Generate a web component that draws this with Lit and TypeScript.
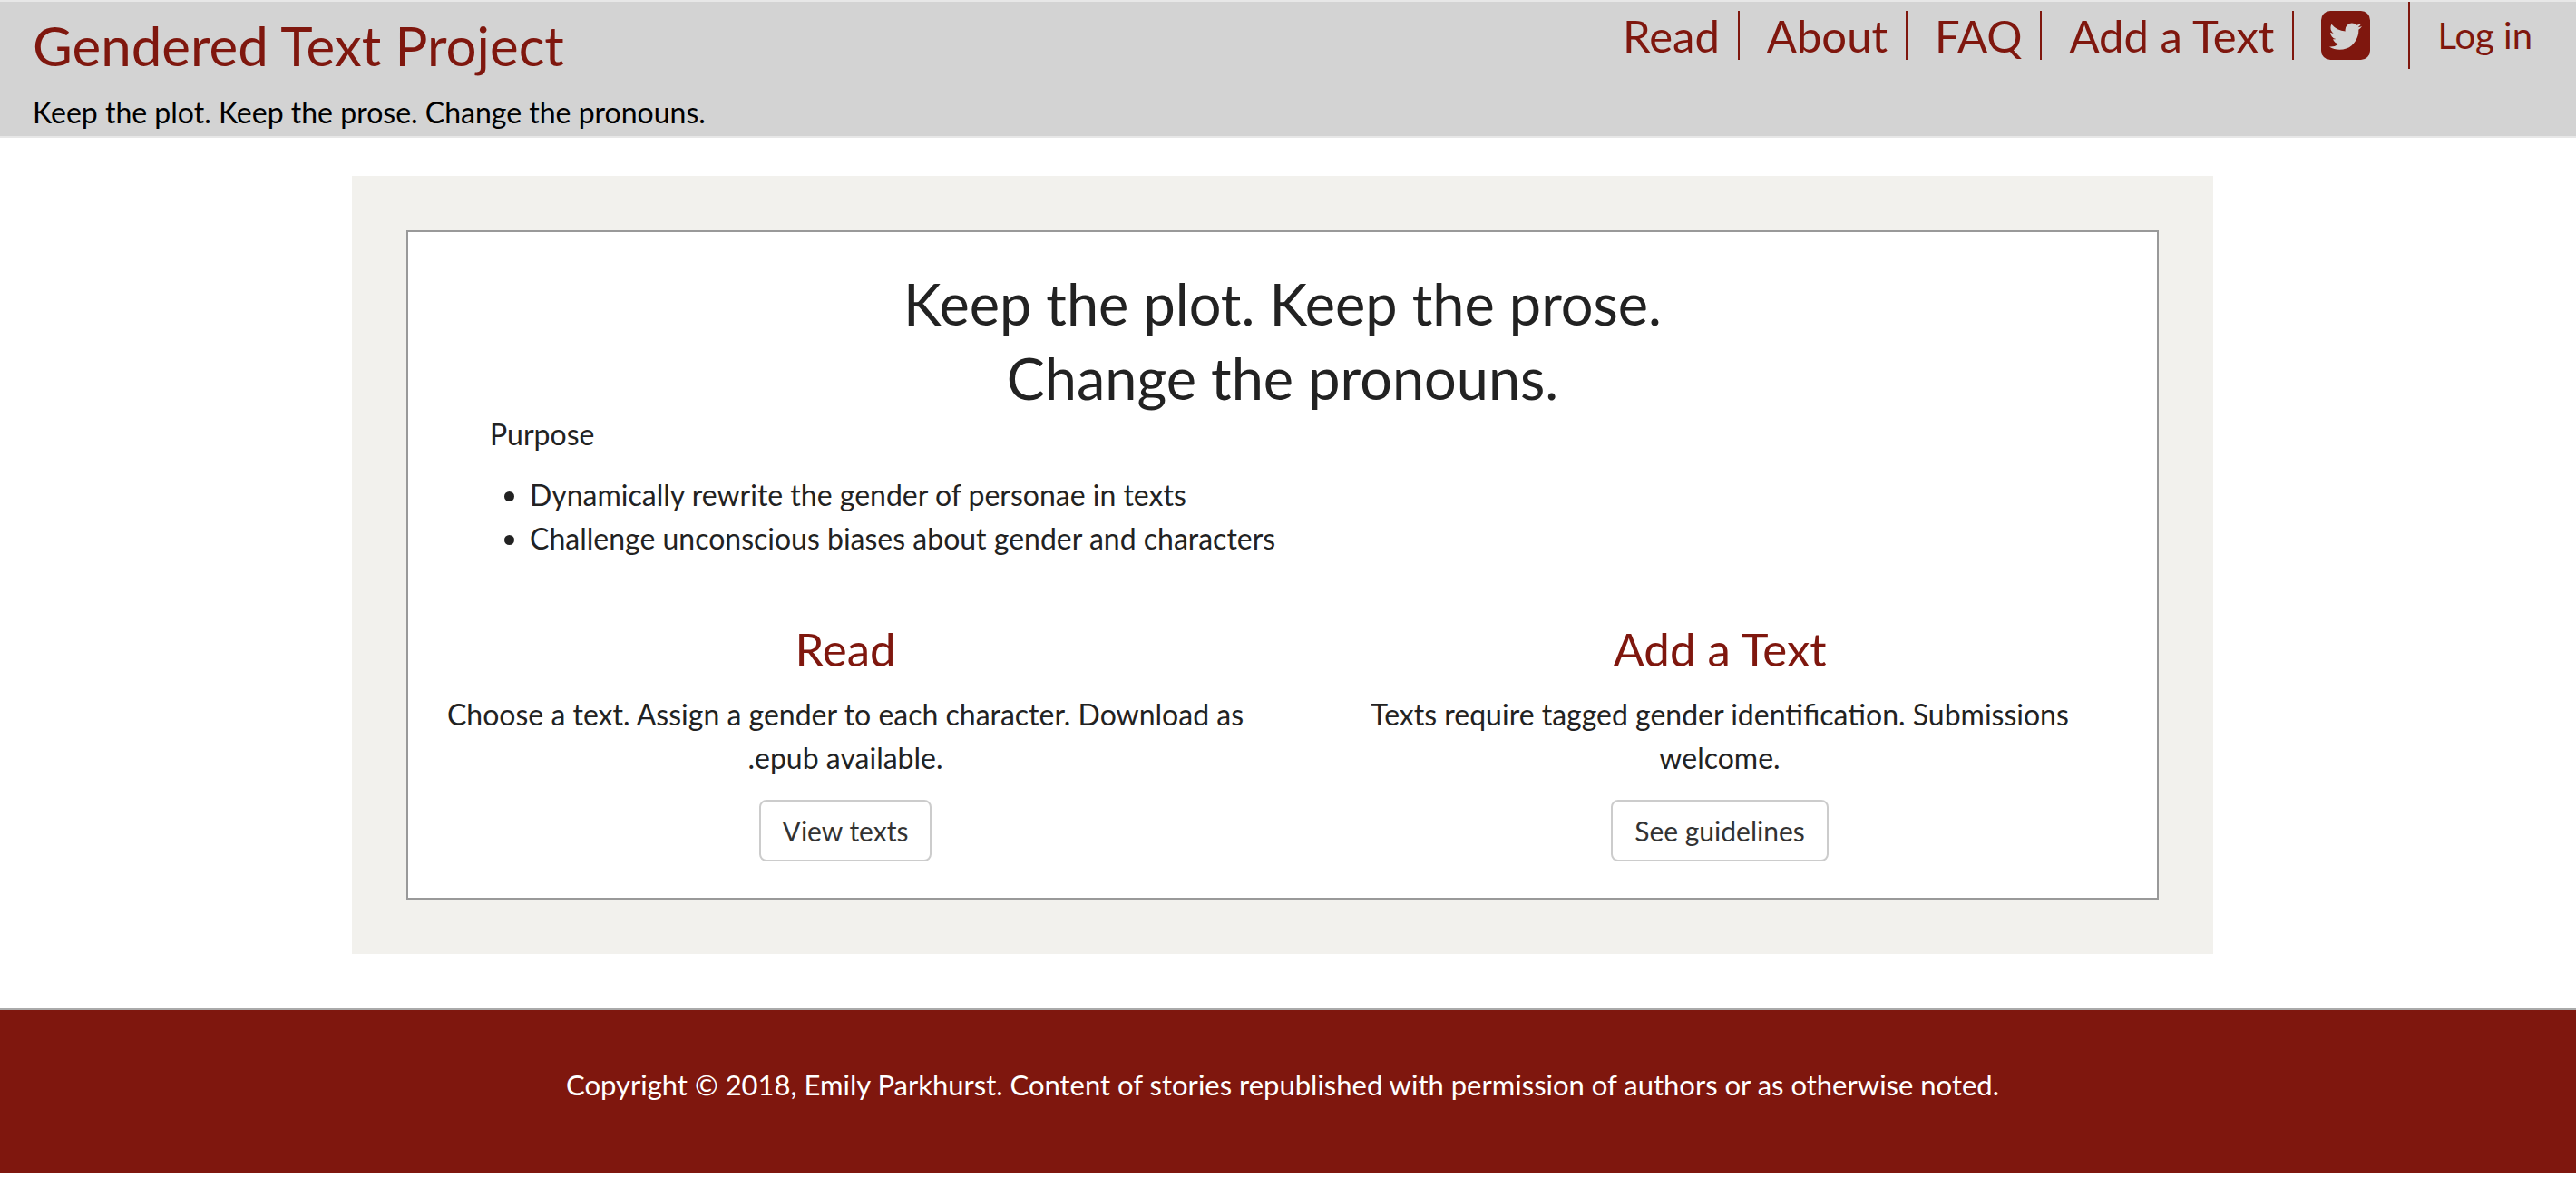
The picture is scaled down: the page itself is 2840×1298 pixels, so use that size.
import { LitElement, html, css } from "lit";
import { customElement } from "lit/decorators.js";

interface NavItem {
  label: string;
  href: string;
}

interface Action {
  title: string;
  text: string;
  button: string;
}

const NAV: NavItem[] = [
  { label: "Read", href: "#read" },
  { label: "About", href: "#about" },
  { label: "FAQ", href: "#faq" },
  { label: "Add a Text", href: "#add" },
];

const PURPOSES: string[] = [
  "Dynamically rewrite the gender of personae in texts",
  "Challenge unconscious biases about gender and characters",
];

const ACTIONS: Action[] = [
  {
    title: "Read",
    text: "Choose a text. Assign a gender to each character. Download as .epub available.",
    button: "View texts",
  },
  {
    title: "Add a Text",
    text: "Texts require tagged gender identification. Submissions welcome.",
    button: "See guidelines",
  },
];

@customElement("site-header")
export class SiteHeader extends LitElement {
  static styles = css`
    :host {
      display: block;
    }
    .bar {
      display: flex;
      justify-content: space-between;
      align-items: flex-start;
      padding: 0 48px 0 36px;
      background: #d3d3d3;
      border-top: 2px solid #e7e7e7;
      border-bottom: 2px solid #e7e7e7;
    }
    a {
      color: #7f170e;
      text-decoration: none;
    }
    .brand {
      display: block;
      font-size: 60px;
      line-height: 96px;
    }
    .tagline {
      margin: 0;
      font-size: 32px;
      line-height: 52px;
      color: #000;
    }
    .menu {
      display: flex;
      align-items: flex-start;
    }
    .links {
      display: flex;
      margin: 0;
      padding: 10px 0 0;
      list-style: none;
    }
    .item {
      margin-right: 30px;
      padding-right: 20px;
      border-right: 2px solid #7f170e;
      font-size: 49px;
      line-height: 54px;
    }
    .item.social {
      margin: 0;
      padding-right: 42px;
      border: 0;
    }
    .icon {
      display: block;
      width: 54px;
      height: 54px;
      fill: #7f170e;
    }
    .login {
      padding-left: 30px;
      border-left: 2px solid #7f170e;
      font-size: 40px;
      line-height: 74px;
    }
  `;

  render() {
    return html`
      <header class="bar">
        <div>
          <a class="brand" href="#home">Gendered Text Project</a>
          <p class="tagline">Keep the plot. Keep the prose. Change the pronouns.</p>
        </div>
        <nav class="menu">
          <ul class="links">
            ${NAV.map(
              (n) => html`<li class="item"><a href=${n.href}>${n.label}</a></li>`
            )}
            <li class="item social">
              <a href="#twitter" aria-label="Twitter">
                <svg class="icon" viewBox="0 0 1536 1536" aria-hidden="true">
                  <path
                    d="M1280 482q-56 25-121 34 68-40 93-117-65 38-134 51-61-66-153-66-87 0-148.5 61.5t-61.5 148.5q0 29 5 48-129-7-242-65t-192-155q-29 50-29 106 0 114 91 175-47-1-100-26v1q0 75 50 133.5t123 72.5q-29 8-51 8-13 0-39-4 21 63 74.5 104t121.5 42q-116 90-261 90-26 0-50-3 148 94 322 94 112 0 210-35.5t168-95 120.5-137 75-162 24.5-168.5q0-18-1-27 63-45 105-109zm256-194v960q0 119-84.5 203.5t-203.5 84.5h-960q-119 0-203.5-84.5t-84.5-203.5v-960q0-119 84.5-203.5t203.5-84.5h960q119 0 203.5 84.5t84.5 203.5z"
                  />
                </svg>
              </a>
            </li>
          </ul>
          <a class="login" href="#login">Log in</a>
        </nav>
      </header>
    `;
  }
}

@customElement("action-card")
export class ActionCard extends LitElement {
  static properties = { action: { attribute: false } };
  declare action: Action;

  static styles = css`
    :host {
      display: block;
      padding: 0 30px;
      text-align: center;
    }
    .title {
      margin: 0 0 20px;
      font-size: 51px;
      font-weight: 400;
      line-height: 56px;
      color: #7f170e;
    }
    .text {
      margin: 0 0 22px;
      font-size: 32px;
      line-height: 48px;
    }
    .button {
      box-sizing: border-box;
      height: 68px;
      padding: 0 24px;
      border: 2px solid #ccc;
      border-radius: 8px;
      background: #fff;
      color: #333;
      font: inherit;
      font-size: 30px;
      cursor: pointer;
    }
  `;

  render() {
    return html`
      <h2 class="title">${this.action.title}</h2>
      <p class="text">${this.action.text}</p>
      <button class="button" type="button">${this.action.button}</button>
    `;
  }
}

@customElement("app-root")
export class AppRoot extends LitElement {
  static styles = css`
    :host {
      display: block;
      min-height: 100vh;
      background: #fff;
      color: #222;
      font-family: Lato, "Open Sans", sans-serif;
      font-size: 32px;
      line-height: 48px;
    }
    .page {
      display: flex;
      justify-content: center;
      padding: 42px 12px 60px 0;
    }
    .panel {
      box-sizing: border-box;
      width: 100%;
      max-width: 2052px;
      padding: 60px;
      background: #f2f1ed;
    }
    .sheet {
      padding: 38px 0 40px;
      border: 2px solid #999;
      background: #fff;
    }
    .headline {
      max-width: 960px;
      margin: 0 auto;
      font-size: 63px;
      font-weight: 400;
      line-height: 82px;
      text-align: center;
    }
    .purpose {
      padding: 0 90px;
    }
    .label {
      margin: 0;
      font-size: 32px;
      font-weight: 400;
      line-height: 42px;
    }
    .list {
      margin: 22px 0 0;
      padding-left: 44px;
    }
    .actions {
      display: grid;
      grid-template-columns: 1fr 1fr;
      margin-top: 70px;
    }
    .footer {
      padding: 58px 12px 74px 0;
      border-top: 2px solid #aaa;
      background: #7f170e;
      color: #fff;
      text-align: center;
    }
    .copyright {
      margin: 0;
      font-size: 31px;
    }
  `;

  render() {
    return html`
      <site-header></site-header>
      <main class="page">
        <div class="panel">
          <div class="sheet">
            <h1 class="headline">
              Keep the plot. Keep the prose.<br />Change the pronouns.
            </h1>
            <section class="purpose">
              <h2 class="label">Purpose</h2>
              <ul class="list">
                ${PURPOSES.map((p) => html`<li>${p}</li>`)}
              </ul>
            </section>
            <div class="actions">
              ${ACTIONS.map((a) => html`<action-card .action=${a}></action-card>`)}
            </div>
          </div>
        </div>
      </main>
      <footer class="footer">
        <p class="copyright">
          Copyright © 2018, Emily Parkhurst. Content of stories republished with
          permission of authors or as otherwise noted.
        </p>
      </footer>
    `;
  }
}
